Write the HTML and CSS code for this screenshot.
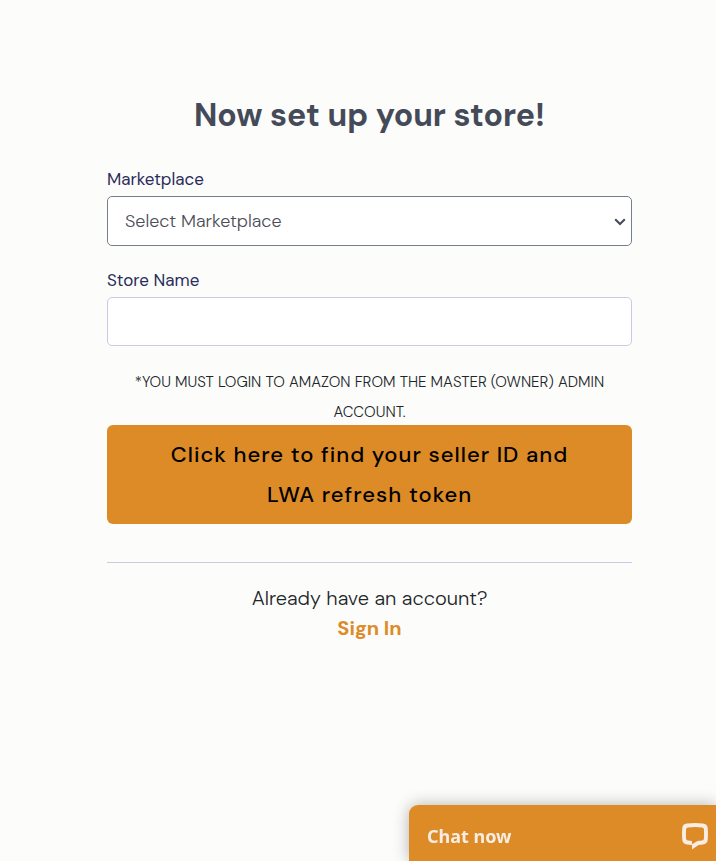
FILE: index.html
```html
<!DOCTYPE html>
<html lang="en">
<head>
<meta charset="utf-8">
<meta name="viewport" content="width=device-width, initial-scale=1">
<title>Set up your store</title>
<link rel="stylesheet" href="styles.css">
</head>
<body>
<main class="setup">
  <h1 class="title">Now set up your store!</h1>
  <form class="form">
    <div class="field">
      <label class="label" for="marketplace">Marketplace</label>
      <div class="select-wrap">
        <select class="control control-select" id="marketplace">
          <option>Select Marketplace</option>
        </select>
        <svg class="chevron" viewBox="0 0 12 8" aria-hidden="true"><path d="M1.200 1.200 6 6l4.800-4.800"/></svg>
      </div>
    </div>
    <div class="field">
      <label class="label" for="store">Store Name</label>
      <input class="control" id="store" type="text">
    </div>
    <p class="note">*YOU MUST LOGIN TO AMAZON FROM THE MASTER (OWNER) ADMIN ACCOUNT.</p>
    <button class="token-button" type="button">Click here to find your seller ID and LWA refresh token</button>
  </form>
  <footer class="signin">
    <p class="signin-text">Already have an account?</p>
    <a class="signin-link" href="#signin">Sign In</a>
  </footer>
</main>
<button class="chat" type="button">
  <span>Chat now</span>
  <svg class="chat-icon" viewBox="0 0 28 28" aria-hidden="true"><path fill-rule="evenodd" d="M6 1.600Q14 .6 22 1.600 26.300 2.100 26.700 6 27.300 12 26.700 18 26.300 21.900 22 22.500L17.500 23 11 27.600V23.100L6 22.500Q1.700 21.900 1.300 18 .7 12 1.300 6 1.700 2.100 6 1.600ZM7 5.400Q5.300 5.600 5.100 7.300 4.700 12 5.100 16.700 5.300 18.400 7 18.600L11 19.100V22.300L16.500 19.100 21 18.600Q22.700 18.400 22.900 16.700 23.300 12 22.900 7.300 22.700 5.600 21 5.400 14 4.600 7 5.400Z"/></svg>
</button>
</body>
</html>
```

FILE: styles.css
```css
* {
  box-sizing: border-box;
}

body {
  margin: 0;
  min-height: 100vh;
  background: #fcfcfa;
  color: #212529;
  font-family: "DM Sans", Inter, sans-serif;
}

.setup {
  padding: 95px 84px 40px 107px;
}

.title {
  margin: 0 0 32px;
  color: #454a59;
  font-size: 32px;
  font-weight: 700;
  line-height: 40px;
  text-align: center;
}

.field {
  margin-bottom: 22px;
}

.label {
  display: block;
  margin-bottom: 5px;
  color: #2b2d5b;
  font-size: 17px;
  font-weight: 400;
  line-height: 24px;
}

.select-wrap {
  position: relative;
}

.control {
  display: block;
  width: 100%;
  height: 49px;
  padding: 0 17px;
  border: 1px solid #c9cbe6;
  border-radius: 5px;
  background: #fff;
  color: #4b4d57;
  font-family: inherit;
  font-size: 18px;
  font-weight: 300;
}

.control-select {
  height: 50px;
  appearance: none;
  border-color: #75808c;
}

.chevron {
  position: absolute;
  top: 22px;
  right: 6px;
  width: 12px;
  height: 8px;
  fill: none;
  stroke: #454a59;
  stroke-width: 2;
  pointer-events: none;
}

.note {
  margin: -1px 0 -2px;
  font-size: 15px;
  font-weight: 300;
  line-height: 30px;
  text-align: center;
}

.token-button {
  display: block;
  width: 100%;
  padding: 10px 48px 9px;
  border: 0;
  border-radius: 6px;
  background: #dd8b27;
  color: #000;
  font-family: inherit;
  font-size: 22px;
  font-weight: 500;
  letter-spacing: 1px;
  line-height: 40px;
}

.signin {
  margin-top: 38px;
  padding-top: 20px;
  border-top: 1px solid #c9cbe6;
  font-size: 20px;
  line-height: 30px;
  text-align: center;
}

.signin-text {
  margin: 0;
  font-weight: 300;
}

.signin-link {
  color: #dd8b27;
  font-weight: 700;
  text-decoration: none;
}

.chat {
  position: fixed;
  right: 0;
  bottom: 0;
  display: flex;
  align-items: center;
  justify-content: space-between;
  width: 307px;
  height: 56px;
  padding: 6px 7px 0 18px;
  border: 0;
  border-radius: 9px 0 0;
  background: #dd8b27;
  box-shadow: 0 0 16px rgba(0, 0, 0, 0.3);
  color: #f8ede4;
  font-family: "Noto Sans", sans-serif;
  font-size: 18px;
  font-weight: 700;
}

.chat-icon {
  width: 28px;
  height: 28px;
  fill: #f8ede4;
}
```
